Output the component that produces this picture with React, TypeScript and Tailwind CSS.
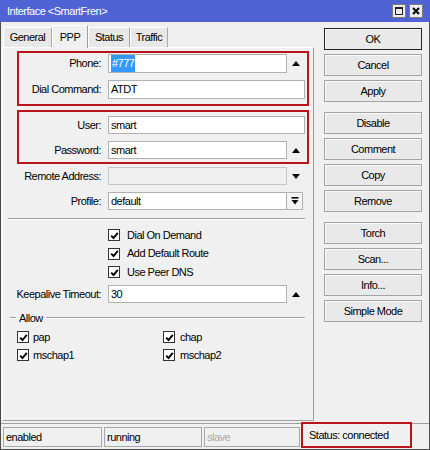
import React from 'react';

const font = "font-['Liberation_Sans',Arial,sans-serif] text-[11px] tracking-[-0.5px] text-black";

function UpArrow() {
  return (
    <svg width="8" height="5" viewBox="0 0 8 5">
      <path d="M0 5 L4 0 L8 5 Z" fill="#000" />
    </svg>
  );
}

function DownArrow() {
  return (
    <svg width="8" height="5" viewBox="0 0 8 5">
      <path d="M0 0 L4 5 L8 0 Z" fill="#000" />
    </svg>
  );
}

function DropIcon() {
  return (
    <svg width="8" height="8" viewBox="0 0 8 8">
      <rect x="0.5" y="0" width="7" height="1.6" fill="#000" />
      <path d="M0.5 3 L4 7.5 L7.5 3 Z" fill="#000" />
    </svg>
  );
}

function Check() {
  return (
    <div className="flex h-[12px] w-[12px] shrink-0 items-center justify-center border border-[#333] bg-white">
      <svg width="9" height="9" viewBox="0 0 9 9">
        <path d="M1.2 4.6 L3.5 7 L7.8 1.8" fill="none" stroke="#000" strokeWidth="1.9" />
      </svg>
    </div>
  );
}

interface FieldProps {
  label: string;
  value?: string;
  boxed?: boolean;
  end?: 'up' | 'down' | 'drop';
  disabled?: boolean;
  selected?: boolean;
  h?: string;
}

function Field({ label, value, boxed, end, disabled, selected, h = 'h-[18px]' }: FieldProps) {
  return (
    <div className={`flex ${h} items-center`}>
      <div className={`flex ${boxed ? 'w-[82px]' : 'w-[84px]'} justify-end whitespace-nowrap`}>
        <span>{label}</span>
      </div>
      <div
        className={`ml-[7px] flex h-full items-center border pl-[2px] ${end ? 'w-[179px]' : 'w-[197px]'} ${
          disabled ? 'border-[#c6c6c6] bg-[#f0f0f0]' : 'border-[#b0b0b0] bg-white'
        }`}
      >
        {selected ? <span className="bg-[#3399ff] px-[1px] text-white">{value}</span> : <span>{value}</span>}
      </div>
      {end === 'up' && (
        <div className="flex w-[18px] items-center justify-center">
          <UpArrow />
        </div>
      )}
      {end === 'down' && (
        <div className="flex w-[18px] items-center justify-center">
          <DownArrow />
        </div>
      )}
      {end === 'drop' && (
        <div className="flex h-full w-[16px] items-center justify-center border border-l-0 border-[#b0b0b0] bg-[#f3f3f3]">
          <DropIcon />
        </div>
      )}
    </div>
  );
}

function Btn({ label, primary }: { label: string; primary?: boolean }) {
  return (
    <div
      className={`flex h-[22px] w-[98px] items-center justify-center border bg-[#e9e9e9] shadow-[inset_1px_1px_0_#fafafa] ${
        primary ? 'border-[#222]' : 'border-[#a3a3a3]'
      }`}
    >
      {label}
    </div>
  );
}

function CheckRow({ label, h = 'h-[18px]' }: { label: string; h?: string }) {
  return (
    <div className={`ml-[91px] flex ${h} items-center gap-[7px]`}>
      <Check />
      <span>{label}</span>
    </div>
  );
}

export default function App() {
  const tabs = [
    { name: 'General', w: 'w-[49px]' },
    { name: 'PPP', w: 'w-[36px]', active: true },
    { name: 'Status', w: 'w-[42px]' },
    { name: 'Traffic', w: 'w-[38px]' },
  ];

  return (
    <div className={`flex h-[450px] w-[430px] flex-col overflow-hidden ${font}`}>
      <div className="flex h-[22px] shrink-0 items-center justify-between bg-[#5063d4] pl-[7px] pr-[7px] text-white">
        <span className="text-white">Interface &lt;SmartFren&gt;</span>
        <div className="flex gap-[3px]">
          <div className="flex h-[14px] w-[14px] items-center justify-center border border-[#7b7b7b] bg-[#ececec]">
            <div className="h-[8px] w-[8px] border border-t-2 border-[#222]" />
          </div>
          <div className="flex h-[14px] w-[14px] items-center justify-center border border-[#7b7b7b] bg-[#ececec]">
            <svg width="8" height="8" viewBox="0 0 8 8">
              <path d="M1 1 L7 7 M7 1 L1 7" stroke="#000" strokeWidth="2" />
            </svg>
          </div>
        </div>
      </div>

      <div className="flex flex-1 flex-col border-x border-b border-[#4d4d4d] bg-[#f0f0f0]">
        <div className="flex">
          <div className="ml-[1px] flex w-[312px] flex-col">
            <div className="flex h-[25px] items-end pl-[1px]">
              {tabs.map((t) =>
                t.active ? (
                  <div
                    key={t.name}
                    className={`relative z-10 -mb-px flex h-[23px] ${t.w} items-start justify-center border border-b-0 border-l-white border-t-white border-r-[#a0a0a0] bg-[#f0f0f0] pt-[3px]`}
                  >
                    {t.name}
                  </div>
                ) : (
                  <div
                    key={t.name}
                    className={`flex h-[20px] ${t.w} items-center justify-center border border-b-0 border-l-white border-t-white border-r-[#a8a8a8] bg-[#e8e8e8]`}
                  >
                    {t.name}
                  </div>
                ),
              )}
            </div>

            <div className="flex h-[374px] flex-col border border-b-[#a0a0a0] border-l-white border-r-[#a0a0a0] border-t-white pl-[14px]">
              <div className="mt-[3px] flex w-[292px] flex-col gap-[7px] border-2 border-[#b8141c] pb-[5px] pt-[1px]">
                <Field label="Phone:" value="#777" boxed end="up" selected h="h-[19px]" />
                <Field label="Dial Command:" value="ATDT" boxed h="h-[19px]" />
              </div>

              <div className="mt-[4px] flex w-[292px] flex-col gap-[7px] border-2 border-[#b8141c] pb-[3px] pt-[4px]">
                <Field label="User:" value="smart" boxed />
                <Field label="Password:" value="smart" boxed end="up" />
              </div>

              <div className="mt-[3px]">
                <Field label="Remote Address:" end="down" disabled />
              </div>
              <div className="mt-[7px]">
                <Field label="Profile:" value="default" end="drop" />
              </div>

              <div className="-ml-[9px] mt-[8px] w-[297px] border-b border-t border-b-white border-t-[#a0a0a0]" />

              <div className="mt-[6px] flex flex-col">
                <CheckRow label="Dial On Demand" />
                <CheckRow label="Add Default Route" h="h-[19px]" />
                <CheckRow label="Use Peer DNS" />
              </div>

              <div className="mt-[4px]">
                <Field label="Keepalive Timeout:" value="30" end="up" />
              </div>

              <div className="-ml-[7px] mt-[8px] flex h-[14px] w-[295px] items-center">
                <div className="w-[6px] border-b border-t border-b-white border-t-[#a0a0a0]" />
                <span className="px-[3px]">Allow</span>
                <div className="flex-1 border-b border-t border-b-white border-t-[#a0a0a0]" />
              </div>

              <div className="mt-[3px] grid grid-cols-[146px_1fr]">
                <div className="flex h-[18px] items-center gap-[4px]">
                  <Check />
                  <span>pap</span>
                </div>
                <div className="flex h-[18px] items-center gap-[5px]">
                  <Check />
                  <span>chap</span>
                </div>
                <div className="flex h-[18px] items-center gap-[4px]">
                  <Check />
                  <span>mschap1</span>
                </div>
                <div className="flex h-[18px] items-center gap-[5px]">
                  <Check />
                  <span>mschap2</span>
                </div>
              </div>
            </div>
          </div>

          <div className="ml-[10px] mt-[6px] flex flex-col">
            <div className="flex flex-col gap-[4px]">
              <Btn label="OK" primary />
              <Btn label="Cancel" />
              <Btn label="Apply" />
            </div>
            <div className="mt-[10px] flex flex-col gap-[4px]">
              <Btn label="Disable" />
              <Btn label="Comment" />
              <Btn label="Copy" />
              <Btn label="Remove" />
            </div>
            <div className="mt-[10px] flex flex-col gap-[4px]">
              <Btn label="Torch" />
              <Btn label="Scan..." />
              <Btn label="Info..." />
              <Btn label="Simple Mode" />
            </div>
          </div>
        </div>

        <div className="mt-[2px] flex h-[26px] items-start border-t border-[#a0a0a0] pt-[3px]">
          <div className="ml-[2px] flex h-[20px] w-[99px] items-center border border-[#a8a8a8] pl-[2px]">enabled</div>
          <div className="ml-[2px] flex h-[20px] w-[98px] items-center border border-[#a8a8a8] pl-[2px]">running</div>
          <div className="ml-[2px] flex h-[20px] w-[96px] items-center border border-[#a8a8a8] pl-[2px] text-[#a8a8a8]">
            slave
          </div>
          <div className="-mt-[5px] ml-[1px] flex h-[26px] w-[111px] items-center border-2 border-[#b8141c] pl-[6px]">
            Status: connected
          </div>
        </div>
      </div>
    </div>
  );
}
